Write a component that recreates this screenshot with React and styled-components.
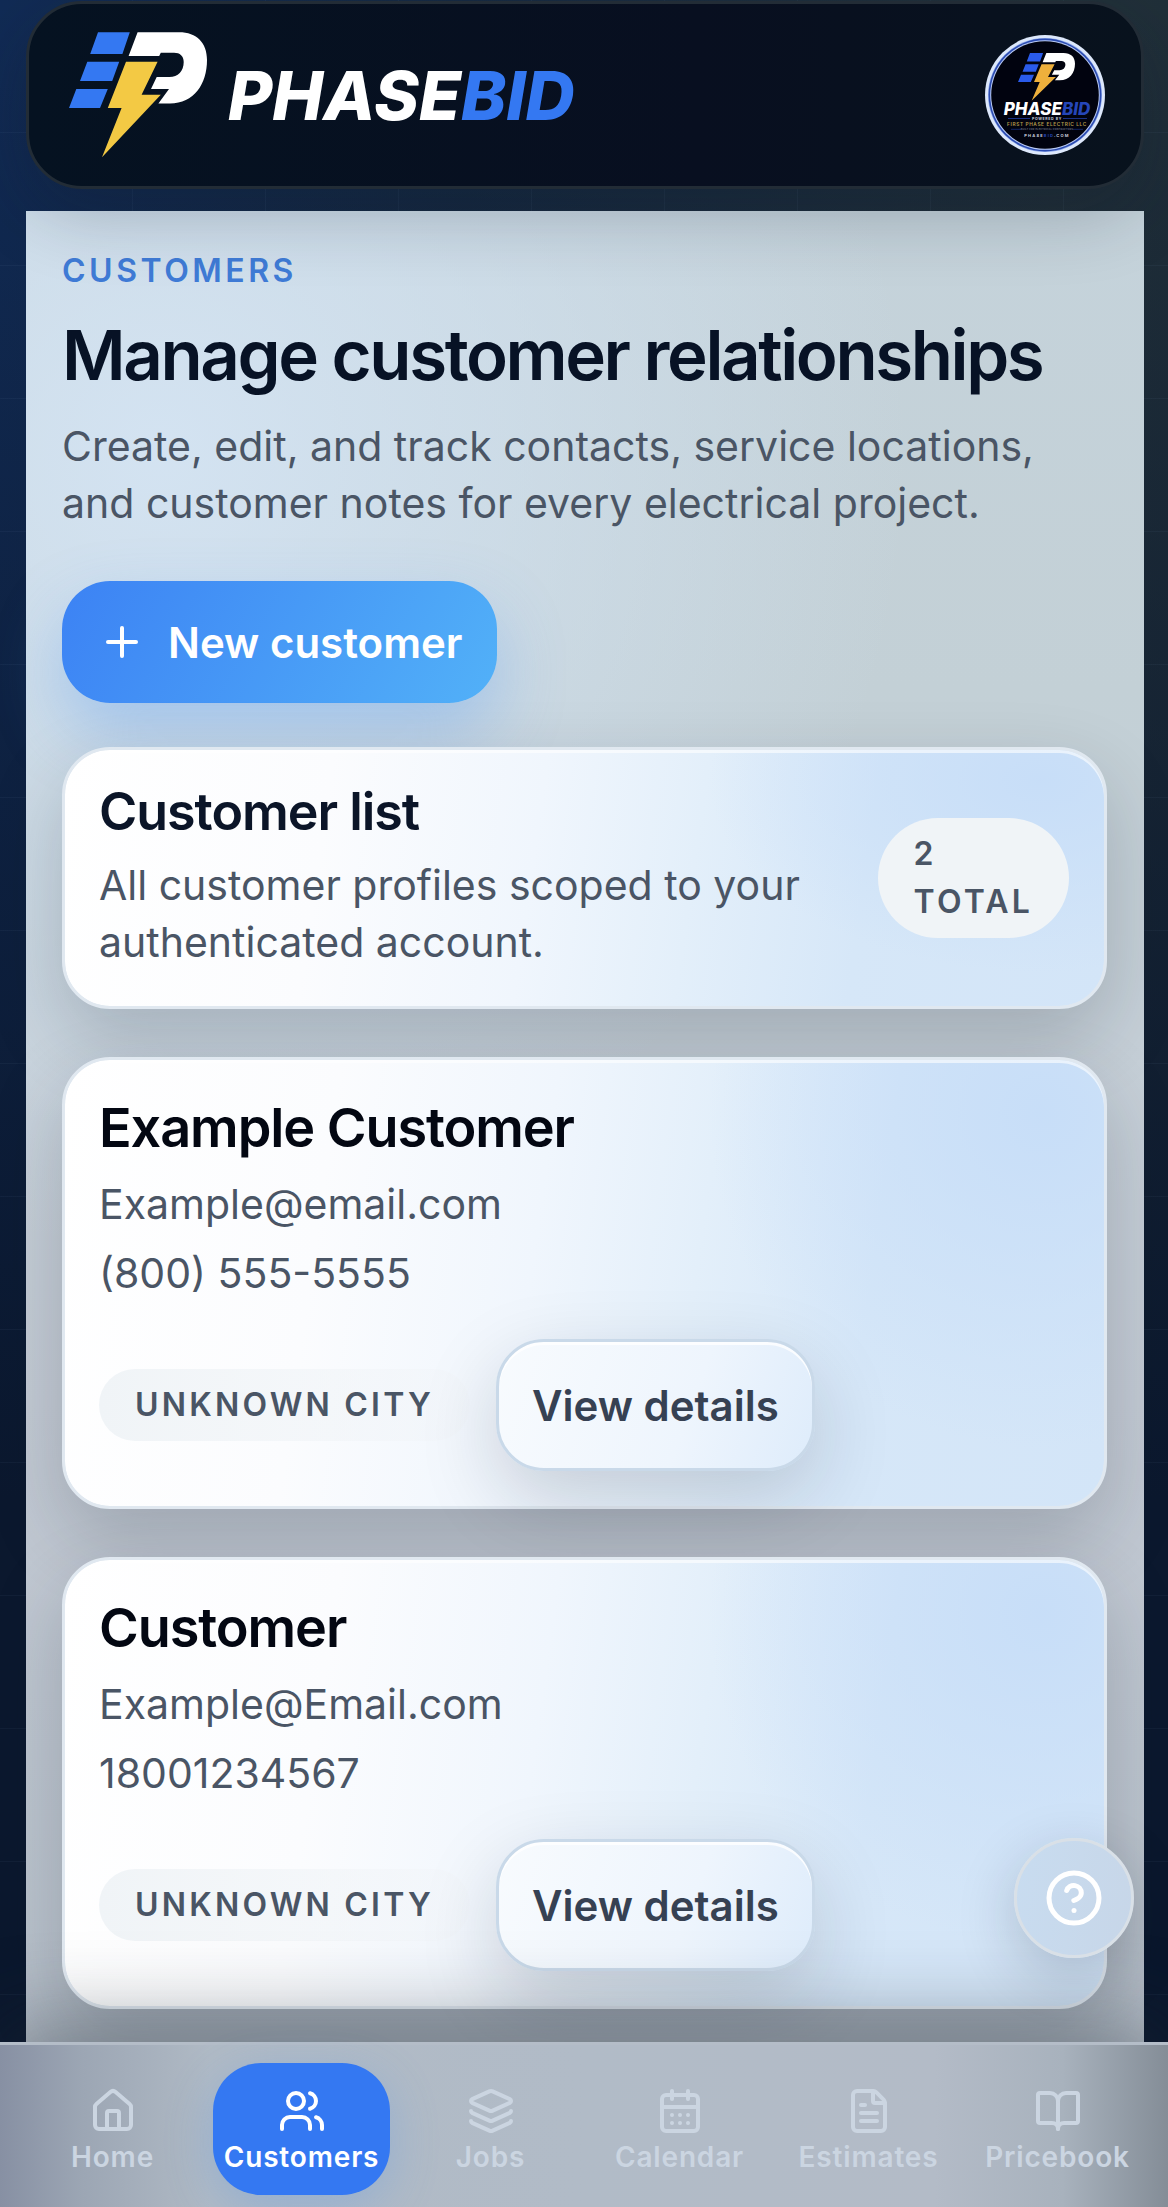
import React from "react";
import styled, { createGlobalStyle } from "styled-components";
import {
  BookOpen,
  CalendarDays,
  CircleQuestionMark,
  FileText,
  House,
  Layers,
  Plus,
  Users,
} from "lucide-react";

const GlobalStyle = createGlobalStyle`
  *, *::before, *::after { box-sizing: border-box; }
  body {
    margin: 0;
    font-family: Inter, "Liberation Sans", sans-serif;
    -webkit-font-smoothing: antialiased;
  }
  h1, h2, h3, p, ul { margin: 0; padding: 0; }
  ul { list-style: none; }
  button { font-family: inherit; border: 0; cursor: pointer; }
  a { color: inherit; text-decoration: none; }
`;

const Page = styled.div`
  display: flex;
  flex-direction: column;
  min-height: 100vh;
  background:
    repeating-linear-gradient(90deg, transparent 0 132px, rgba(148, 180, 220, 0.05) 132px 133px),
    repeating-linear-gradient(180deg, transparent 0 132px, rgba(148, 180, 220, 0.05) 132px 133px),
    linear-gradient(180deg, transparent 0, rgba(11, 24, 46, 0.6) 900px, #0b182e 1500px),
    linear-gradient(90deg, #112b55 0%, #162a42 40%, #223139 90%, #202f39 100%);
`;

const Shell = styled.div`
  flex: 1;
  display: flex;
  flex-direction: column;
  gap: 22px;
  padding: 1px 24px 0 26px;
`;

const Header = styled.header`
  position: relative;
  z-index: 1;
  display: flex;
  align-items: center;
  justify-content: space-between;
  min-height: 188px;
  padding: 0 36px 0 40px;
  border: 3px solid #222c36;
  border-radius: 56px;
  background: linear-gradient(90deg, #051221 0%, #080f20 60%, #08121d 100%);
  box-shadow: 0 24px 72px rgba(15, 23, 42, 0.24);
`;

const Brand = styled.a`
  display: flex;
  align-items: center;
  gap: 21px;
`;

const Mark = styled.svg`
  display: block;
  width: 138px;
  height: 126px;
`;

const Wordmark = styled.span`
  color: #fff;
  font-size: 68px;
  font-style: italic;
  font-weight: 800;
  line-height: 74px;
`;

const WordAccent = styled.span`
  color: #3478f2;
`;

const AvatarButton = styled.button`
  width: 120px;
  height: 120px;
  padding: 0;
  border-radius: 50%;
  background: none;
`;

const Panel = styled.main`
  flex: 1;
  padding: 36px 37px 32px 36px;
  background:
    radial-gradient(ellipse 750px 800px at 12% 240px, rgba(214, 230, 246, 0.85) 0, rgba(212, 228, 243, 0.55) 45%, transparent 100%),
    linear-gradient(180deg, #c5d3db 0, #c3d0d6 26%, #c6d0d8 45%, #c3cad4 65%, #b8c1cb 100%);
`;

const Eyebrow = styled.p`
  color: #3f7bd6;
  font-size: 32px;
  font-weight: 600;
  line-height: 48px;
  letter-spacing: 0.11em;
  text-transform: uppercase;
`;

const Title = styled.h1`
  margin-top: 18px;
  color: #071225;
  font-size: 69px;
  font-weight: 600;
  line-height: 84px;
  letter-spacing: -0.035em;
`;

const BodyText = styled.p`
  color: #4a5565;
  font-size: 41px;
  line-height: 57px;
`;

const Lead = styled(BodyText)`
  margin-top: 21px;
`;

const PrimaryButton = styled.button`
  display: flex;
  align-items: center;
  gap: 22px;
  height: 122px;
  margin: 49px 0 44px;
  padding: 0 34px 0 36px;
  border-radius: 48px;
  color: #fff;
  font-size: 42px;
  font-weight: 600;
  background: linear-gradient(120deg, #3c82f4, #52b1f8);
  box-shadow: 0 30px 66px rgba(80, 150, 240, 0.34);
`;

const Stack = styled.div`
  display: grid;
  gap: 48px;
`;

const Card = styled.section`
  padding: 35px 35px 35px 34px;
  border: 3px solid #e0e8f0;
  border-radius: 48px;
  background:
    radial-gradient(ellipse 32% 75% at 94% 12%, rgba(198, 221, 248, 0.9) 0, transparent 100%) padding-box,
    linear-gradient(98deg, #fff 0%, #fbfcfe 25%, #f0f6fd 45%, #e3effa 60%, #d6e7f8 76%, #d3e5f8 100%) padding-box,
    #e0e8f0;
  box-shadow:
    inset 0 3px 0 rgba(255, 255, 255, 0.6),
    0 30px 78px rgba(15, 23, 42, 0.2);
`;

const SummaryCard = styled(Card)`
  display: flex;
  align-items: center;
  justify-content: space-between;
  gap: 48px;
`;

const SummaryText = styled.div`
  flex: 1;
  display: grid;
  gap: 18px;
`;

const CardTitle = styled.h2`
  color: #0b1528;
  font-size: 52px;
  font-weight: 600;
  line-height: 54px;
  letter-spacing: -0.02em;
`;

const CustomerName = styled.h3`
  color: #030712;
  font-size: 54px;
  font-weight: 600;
  line-height: 66px;
  letter-spacing: -0.02em;
`;

const Contact = styled.div`
  display: grid;
  gap: 12px;
  margin: 15px 0 37px;
`;

const Actions = styled.div`
  display: flex;
  align-items: center;
  gap: 26px;
`;

const Pill = styled.span`
  padding: 12px 36px;
  border-radius: 60px;
  color: #4a5565;
  background: ${(p) => (p.$faded ? "linear-gradient(90deg, #f0f4f7, rgba(240, 243, 247, 0.3))" : "#f0f4f7")};
  font-size: 32px;
  font-weight: 600;
  line-height: 48px;
  letter-spacing: 0.1em;
  text-transform: uppercase;
`;

const TotalPill = styled(Pill)`
  width: min-content;
`;

const SecondaryButton = styled.button`
  height: 132px;
  padding: 0 33px;
  border: 3px solid #c9d9e9;
  border-radius: 48px;
  color: #364153;
  font-size: 42px;
  font-weight: 600;
  background: linear-gradient(110deg, #f8fbfe, #eef5fd 60%, #deecfb);
  box-shadow:
    inset 0 3px 0 rgba(255, 255, 255, 0.8),
    0 27px 78px rgba(15, 23, 42, 0.17);
`;

const HelpButton = styled.button`
  position: fixed;
  z-index: 3;
  right: 34px;
  bottom: 249px;
  display: grid;
  place-items: center;
  width: 120px;
  height: 120px;
  padding: 0;
  border: 3px solid #d9e0e7;
  border-radius: 50%;
  color: #fff;
  background: linear-gradient(100deg, #c8dcf0, #c7d6e8);
  box-shadow: 0 18px 60px rgba(15, 23, 42, 0.2);
`;

const TabBar = styled.nav`
  position: relative;
  z-index: 2;
  padding: 18px 22px 12px 24px;
  border-top: 3px solid #b4bdc8;
  background: linear-gradient(90deg, #8790a3 0, #9ca6b4 7%, #b0bac5 18%, #b1bbc7 50%, #b3bbc7 80%, #a8b2bd 91%, #848d97 100%);
  box-shadow: 0 -18px 84px rgba(30, 41, 50, 0.42);
`;

const TabList = styled.ul`
  display: grid;
  grid-template-columns: repeat(6, 1fr);
  gap: 12px;
`;

const Tab = styled.a`
  display: flex;
  flex-direction: column;
  align-items: center;
  gap: 6px;
  height: 132px;
  padding-top: 24px;
  border-radius: 48px;
  color: ${(p) => (p.$active ? "#fff" : "#cbd5e1")};
  background: ${(p) => (p.$active ? "#3478f2" : "transparent")};
  box-shadow: ${(p) => (p.$active ? "0 12px 48px rgba(80, 150, 240, 0.3)" : "none")};
  font-size: 28px;
  font-weight: 600;
  line-height: 32px;
  letter-spacing: 0.03em;
`;

function MarkShapes({ blue, yellow }) {
  return (
    <>
      <path
        fill={blue}
        d="M98 32.3H129.8L122.4 54H90.2ZM87.3 61.7H119.2L112.2 81H80ZM76.3 89H107.8L100 108H69Z"
      />
      <path
        fill="#fff"
        d="M137.6 32.3H179C197 32.3 207 43 207 60C207 84 194 103.5 170 103.5H158.4L169 89H151L156.7 77H169.4C178 77 183.7 71 183.7 62C183.7 56 180 52.7 174 52.7H160.8L159.2 56H128.6Z"
      />
      <path fill={yellow} d="M126 61.7H157.6L141.6 94.7H160.8L102 157.3L121.6 108H107.8Z" />
    </>
  );
}

function AvatarArt() {
  return (
    <svg viewBox="0 0 120 120" width="120" height="120" role="img" aria-label="PhaseBid account">
      <circle cx="60" cy="60" r="60" fill="#dde8fb" />
      <circle cx="60" cy="60" r="57" fill="#8ea8ea" />
      <circle cx="60" cy="60" r="56.4" fill="#2b4bb0" />
      <circle cx="60" cy="60" r="54.8" fill="#b9caf4" />
      <circle cx="60" cy="60" r="53.8" fill="#01030f" />
      <svg x="33" y="18" width="57" height="48" viewBox="69 32 138 126" preserveAspectRatio="none">
        <MarkShapes blue="#2a5bea" yellow="#eeb03c" />
      </svg>
      <g fontFamily="Inter, sans-serif" textAnchor="middle">
        <text x="62" y="79.5" fontSize="17" fontWeight="800" fontStyle="italic" fill="#fff">
          PHASE<tspan fill="#2546b8">BID</tspan>
        </text>
        <text x="62" y="85" fontSize="3.6" fontWeight="700" fill="#c9cfdd" letterSpacing="0.6">
          POWERED BY
        </text>
        <text x="62" y="90.6" fontSize="4.8" fontWeight="600" fill="#b39a4a" letterSpacing="0.6">
          FIRST PHASE ELECTRIC LLC
        </text>
        <text x="62" y="95.4" fontSize="2.4" fontWeight="500" fill="#7d8699" letterSpacing="0.2">
          BUILT FOR ELECTRICAL CONTRACTORS
        </text>
        <text x="62" y="102" fontSize="4" fontWeight="700" fill="#c9cfdd" letterSpacing="1.2">
          PHASE<tspan fill="#2546b8">BID</tspan>.COM
        </text>
      </g>
      <path d="M23 83.5H45M78 83.5H102" stroke="#2546b8" strokeWidth="0.7" />
      <path d="M26 94.3H36M88 94.3H98" stroke="#2546b8" strokeWidth="0.5" />
    </svg>
  );
}

const customers = [
  { name: "Example Customer", email: "Example@email.com", phone: "(800) 555-5555", city: "Unknown city" },
  { name: "Customer", email: "Example@Email.com", phone: "18001234567", city: "Unknown city" },
];

const tabs = [
  { label: "Home", icon: House },
  { label: "Customers", icon: Users, active: true },
  { label: "Jobs", icon: Layers },
  { label: "Calendar", icon: CalendarDays },
  { label: "Estimates", icon: FileText },
  { label: "Pricebook", icon: BookOpen },
];

export default function App() {
  return (
    <Page>
      <GlobalStyle />
      <Shell>
        <Header>
          <Brand href="#home">
            <Mark viewBox="69 32 138 126" aria-hidden="true">
              <MarkShapes blue="#3478f2" yellow="#f3c944" />
            </Mark>
            <Wordmark>
              PHASE<WordAccent>BID</WordAccent>
            </Wordmark>
          </Brand>
          <AvatarButton type="button">
            <AvatarArt />
          </AvatarButton>
        </Header>

        <Panel>
          <Eyebrow>Customers</Eyebrow>
          <Title>Manage customer relationships</Title>
          <Lead>
            Create, edit, and track contacts, service locations, and customer notes for every electrical project.
          </Lead>
          <PrimaryButton type="button">
            <Plus size={48} strokeWidth={2} aria-hidden="true" />
            New customer
          </PrimaryButton>

          <Stack>
            <SummaryCard>
              <SummaryText>
                <CardTitle>Customer list</CardTitle>
                <BodyText>All customer profiles scoped to your authenticated account.</BodyText>
              </SummaryText>
              <TotalPill>2 total</TotalPill>
            </SummaryCard>

            {customers.map((c) => (
              <Card key={c.name}>
                <CustomerName>{c.name}</CustomerName>
                <Contact>
                  <BodyText>{c.email}</BodyText>
                  <BodyText>{c.phone}</BodyText>
                </Contact>
                <Actions>
                  <Pill $faded>{c.city}</Pill>
                  <SecondaryButton type="button">View details</SecondaryButton>
                </Actions>
              </Card>
            ))}
          </Stack>
        </Panel>
      </Shell>

      <HelpButton type="button" aria-label="Help">
        <CircleQuestionMark size={60} strokeWidth={2} aria-hidden="true" />
      </HelpButton>

      <TabBar aria-label="Main">
        <TabList>
          {tabs.map(({ label, icon: Icon, active }) => (
            <li key={label}>
              <Tab href={`#${label.toLowerCase()}`} $active={active} aria-current={active ? "page" : undefined}>
                <Icon size={48} strokeWidth={2} aria-hidden="true" />
                {label}
              </Tab>
            </li>
          ))}
        </TabList>
      </TabBar>
    </Page>
  );
}
